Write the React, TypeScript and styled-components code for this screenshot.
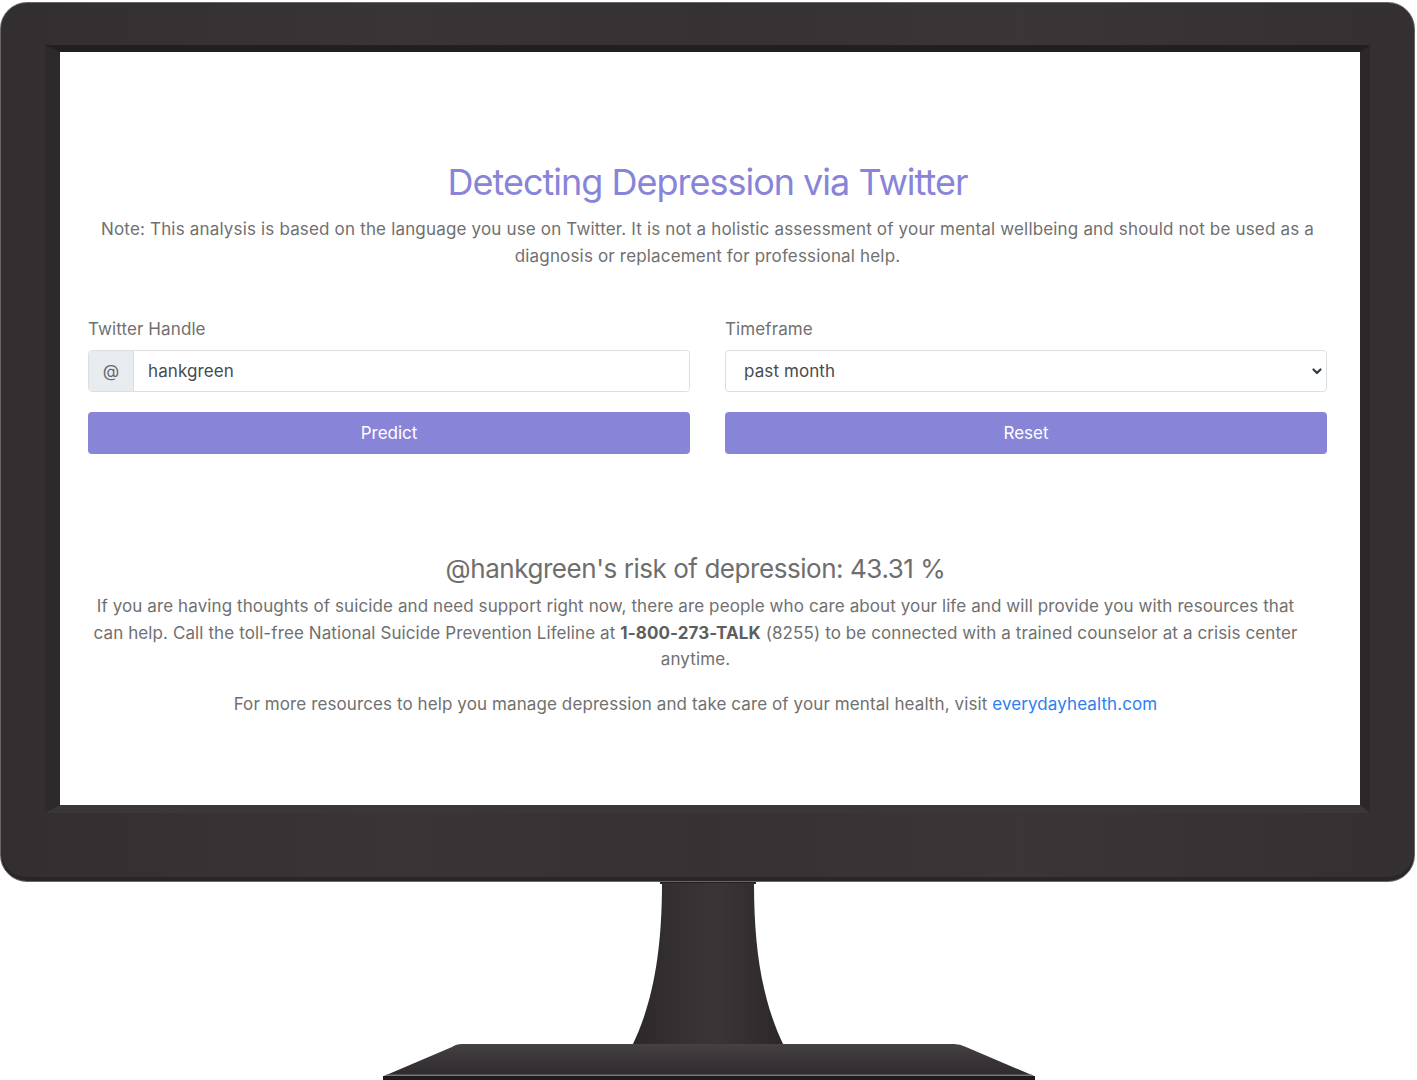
import React from "react";
import styled, { createGlobalStyle } from "styled-components";

const Global = createGlobalStyle`
  html, body { margin: 0; padding: 0; background: #fff; }
  body {
    width: 1417px;
    height: 1080px;
    overflow: hidden;
    font-family: Inter, "Noto Sans", "Liberation Sans", sans-serif;
  }
  * { box-sizing: border-box; }
`;

const Stage = styled.div`
  width: 1417px;
  height: 1080px;
  padding-top: 2px;
  display: flex;
  flex-direction: column;
  overflow: hidden;
`;

const Frame = styled.div`
  width: 1415px;
  border: 1px solid #6a6667;
  border-radius: 27px;
  background: linear-gradient(
    90deg,
    #332f30 0%,
    #393536 28%,
    #363233 50%,
    #3a3637 72%,
    #343031 100%
  );
  padding: 42px 44px 68px 44px;
  box-shadow: inset 0 -4px 0 #2a2627;
`;

const Bevel = styled.div`
  border-style: solid;
  border-width: 7px 10px 8px 15px;
  border-color: #231f20 #2c2829 #3b3738 #2e2a2b;
`;

const Screen = styled.main`
  width: 1300px;
  height: 753px;
  background: #fff;
  padding: 109px 33px 0 28px;
  display: flex;
  flex-direction: column;
  color: #707070;
  font-size: 17px;
  letter-spacing: 0.1px;
`;

const Title = styled.h1`
  margin: 0;
  text-align: center;
  font-size: 36px;
  line-height: 43px;
  font-weight: 400;
  letter-spacing: -1px;
  color: #8884d8;
`;

const Note = styled.p`
  margin: 12px 0 0;
  text-align: center;
  line-height: 27px;
  letter-spacing: 0.17px;
`;

const FormGrid = styled.div`
  margin-top: 46px;
  display: grid;
  grid-template-columns: 1fr 1fr;
  column-gap: 35px;
`;

const Field = styled.div`
  display: flex;
  flex-direction: column;
`;

const Label = styled.label`
  line-height: 27px;
  margin-bottom: 7px;
`;

const InputGroup = styled.div`
  display: flex;
  height: 42px;
  border: 1px solid #dadfe4;
  border-radius: 4px;
  overflow: hidden;
`;

const Prepend = styled.span`
  width: 45px;
  display: flex;
  align-items: center;
  justify-content: center;
  background: #e9ecef;
  border-right: 1px solid #dadfe4;
  color: #606870;
`;

const TextInput = styled.input`
  flex: 1;
  border: none;
  outline: none;
  padding: 0 14px;
  font: inherit;
  font-size: 17px;
  letter-spacing: 0.1px;
  color: #454b52;
  background: #fff;
`;

const SelectWrap = styled.div`
  position: relative;
  height: 42px;
`;

const Select = styled.select`
  appearance: none;
  width: 100%;
  height: 100%;
  border: 1px solid #dadfe4;
  border-radius: 4px;
  padding: 0 18px;
  font: inherit;
  font-size: 17px;
  letter-spacing: 0.1px;
  color: #454b52;
  background: #fff;
`;

const Chevron = styled.svg`
  position: absolute;
  right: 4px;
  top: 16px;
  pointer-events: none;
`;

const Button = styled.button`
  margin-top: 20px;
  height: 42px;
  border: none;
  border-radius: 4px;
  background: #8884d8;
  color: #fff;
  font: inherit;
  font-size: 17px;
`;

const ResultSection = styled.section`
  margin-top: 99px;
  padding-right: 24px;
  display: flex;
  flex-direction: column;
  text-align: center;
`;

const Result = styled.h2`
  margin: 0;
  font-size: 26px;
  line-height: 31px;
  font-weight: 400;
  letter-spacing: -0.45px;
  color: #6e6e6e;
`;

const Help = styled.p`
  margin: 9px 0 0;
  line-height: 26.5px;
`;

const Strong = styled.strong`
  font-weight: 700;
  color: #5e5e5e;
`;

const More = styled.p`
  margin: 18px 0 0;
  line-height: 26.5px;
`;

const Link = styled.a`
  color: #2d7ef0;
  text-decoration: none;
`;

const Stand = styled.svg`
  display: block;
  flex: none;
`;

export default function App() {
  return (
    <Stage>
      <Global />
      <Frame>
        <Bevel>
          <Screen>
            <Title>Detecting Depression via Twitter</Title>
            <Note>
              Note: This analysis is based on the language you use on Twitter. It is not a holistic
              assessment of your mental wellbeing and should not be used as a
              <br />
              diagnosis or replacement for professional help.
            </Note>
            <FormGrid>
              <Field>
                <Label>Twitter Handle</Label>
                <InputGroup>
                  <Prepend>@</Prepend>
                  <TextInput defaultValue="hankgreen" />
                </InputGroup>
                <Button>Predict</Button>
              </Field>
              <Field>
                <Label>Timeframe</Label>
                <SelectWrap>
                  <Select defaultValue="month">
                    <option value="week">past week</option>
                    <option value="month">past month</option>
                    <option value="year">past year</option>
                  </Select>
                  <Chevron width="12" height="10" viewBox="0 0 12 10">
                    <path d="M2.5 3.5l3.5 3.5 3.5-3.5" fill="none" stroke="#343a40" strokeWidth="2.2" strokeLinecap="round" strokeLinejoin="round" />
                  </Chevron>
                </SelectWrap>
                <Button>Reset</Button>
              </Field>
            </FormGrid>
            <ResultSection>
              <Result>@hankgreen's risk of depression: 43.31 %</Result>
              <Help>
                If you are having thoughts of suicide and need support right now, there are people who
                care about your life and will provide you with resources that
                <br />
                can help. Call the toll-free National Suicide Prevention Lifeline at{" "}
                <Strong>1-800-273-TALK</Strong> (8255) to be connected with a trained counselor at a
                crisis center
                <br />
                anytime.
              </Help>
              <More>
                For more resources to help you manage depression and take care of your mental health,
                visit <Link href="#">everydayhealth.com</Link>
              </More>
            </ResultSection>
          </Screen>
        </Bevel>
      </Frame>
      <Stand width="1417" height="198" viewBox="0 882 1417 198">
        <defs>
          <linearGradient id="neck" x1="0" x2="1" y1="0" y2="0">
            <stop offset="0" stopColor="#2c2829" />
            <stop offset="0.35" stopColor="#363233" />
            <stop offset="0.55" stopColor="#3a3637" />
            <stop offset="1" stopColor="#2c2829" />
          </linearGradient>
          <linearGradient id="base" x1="0" x2="0" y1="0" y2="1">
            <stop offset="0" stopColor="#46423f" />
            <stop offset="0.5" stopColor="#38343a" />
            <stop offset="1" stopColor="#2e2a2b" />
          </linearGradient>
        </defs>
        <rect x="660" y="882" width="96" height="2" fill="#231f20" />
        <path
          d="M662 883 C662 955 652 1005 632 1046 L784 1046 C764 1005 754 955 754 883 Z"
          fill="url(#neck)"
        />
        <path
          d="M462 1044 L954 1044 Q960 1044 966 1047 L1034 1076 L384 1076 L452 1047 Q456 1044 462 1044 Z"
          fill="url(#base)"
        />
        <rect x="386" y="1074.5" width="646" height="1.5" fill="#7a7677" />
        <rect x="383" y="1076" width="652" height="4" fill="#1f1b1c" />
      </Stand>
    </Stage>
  );
}
